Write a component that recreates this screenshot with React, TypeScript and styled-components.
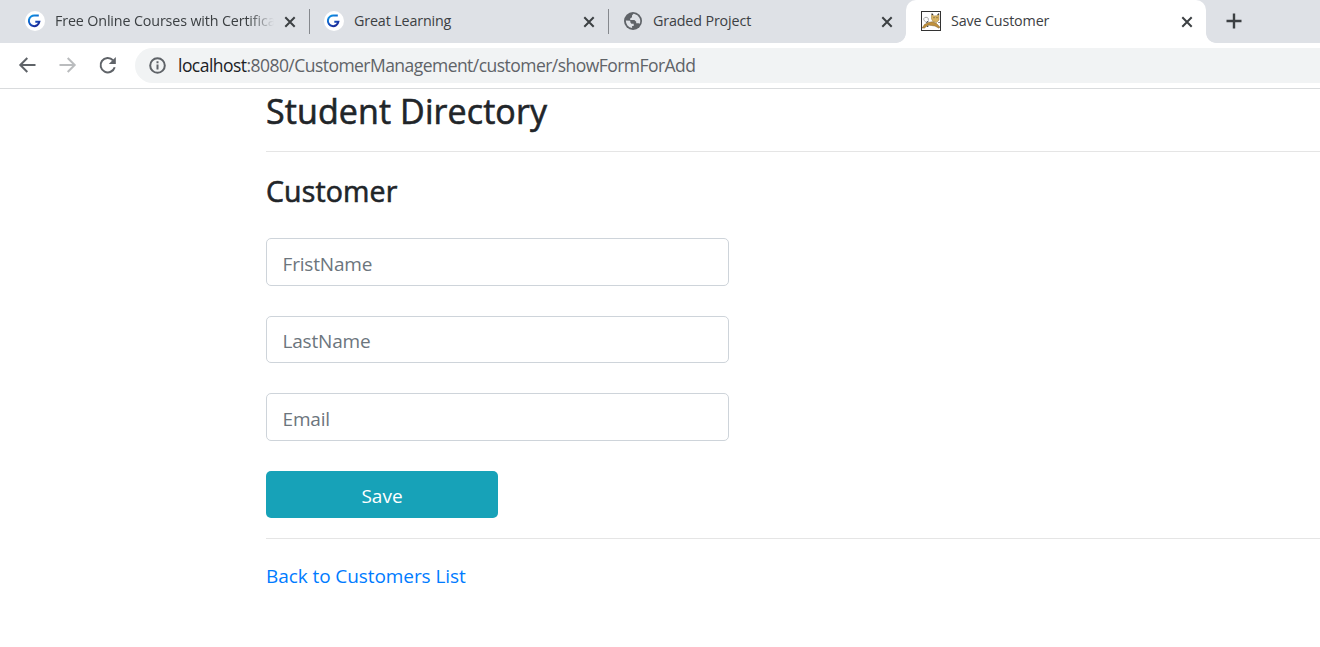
import React from 'react';
import styled, { createGlobalStyle } from 'styled-components';

const Global = createGlobalStyle`
  * { box-sizing: border-box; }
  html, body { margin: 0; background: #fff; overflow: hidden; }
  body { font-family: "Segoe UI", "Open Sans", "Noto Sans", sans-serif; color: #212529; }
`;

const Window = styled.div`
  width: 1320px;
  height: 647px;
  overflow: hidden;
  background: #fff;
`;

const TabStrip = styled.div`
  display: flex;
  height: 43px;
  background: #dee1e6;
`;

const Tab = styled.div<{ $width: number; $pad: number; $active?: boolean }>`
  position: relative;
  display: flex;
  align-items: center;
  flex: none;
  width: ${p => p.$width}px;
  height: 43px;
  padding: 0 13px 1px ${p => p.$pad}px;
  background: ${p => (p.$active ? '#fff' : 'transparent')};
  border-radius: ${p => (p.$active ? '10px 10px 0 0' : '0')};
`;

const Foot = styled.span<{ $side: 'left' | 'right' }>`
  position: absolute;
  bottom: 0;
  ${p => p.$side}: -10px;
  width: 10px;
  height: 10px;
  background: radial-gradient(circle at ${p => (p.$side === 'left' ? '0 0' : '100% 0')}, #dee1e6 9.5px, #fff 10.2px);
`;

const Favicon = styled.svg`
  flex: none;
  width: 20px;
  height: 20px;
`;

const TabTitle = styled.span<{ $fade?: boolean }>`
  flex: 1;
  min-width: 0;
  margin-left: 10px;
  overflow: hidden;
  white-space: nowrap;
  font-size: 14.3px;
  line-height: 22px;
  letter-spacing: -0.14px;
  color: #3c4043;
  ${p => p.$fade && 'mask-image: linear-gradient(to right, #000 calc(100% - 26px), transparent);'}
`;

const CloseIcon = styled.svg`
  flex: none;
  width: 12px;
  height: 12px;
  margin: 1px 0 0 10px;
  stroke: #3c4043;
  stroke-width: 2;
`;

const Divider = styled.span`
  flex: none;
  width: 1px;
  height: 25px;
  margin-top: 9px;
  background: #85888d;
`;

const NewTab = styled.svg`
  width: 16px;
  height: 16px;
  margin: 13px 0 0 20px;
  stroke: #3c4043;
  stroke-width: 2.4;
`;

const Toolbar = styled.div`
  display: flex;
  height: 46px;
  padding: 5px 0 0 17px;
  border-bottom: 1px solid #d9dbdd;
`;

const NavIcon = styled.svg<{ $color: string }>`
  flex: none;
  width: 20px;
  height: 20px;
  margin: 7px 20px 0 0;
  fill: none;
  stroke: ${p => p.$color};
  stroke-width: 2;
`;

const AddressBar = styled.div`
  display: flex;
  align-items: center;
  flex: 1;
  height: 35px;
  margin-left: -2px;
  padding-left: 14px;
  background: #f1f3f4;
  border-radius: 18px 0 0 18px;
`;

const InfoIcon = styled.svg`
  flex: none;
  width: 17px;
  height: 17px;
  fill: none;
  stroke: #5f6368;
  stroke-width: 2;
`;

const Url = styled.span`
  margin: 0 0 2px 12px;
  font-size: 17.5px;
  letter-spacing: -0.54px;
  line-height: 24px;
  color: #5f6368;
  white-space: nowrap;
`;

const Host = styled.span`
  color: #202124;
`;

const Page = styled.main`
  width: 1320px;
  padding: 0 0 0 266px;
`;

const Title = styled.h3`
  margin: 0;
  padding-top: 1px;
  height: 62px;
  font-size: 34px;
  font-weight: 500;
  line-height: 42px;
  letter-spacing: 0.1px;
  -webkit-text-stroke: 0.6px #212529;
`;

const SubTitle = styled.h4`
  margin: 0;
  padding-top: 21px;
  height: 86px;
  font-size: 28.5px;
  font-weight: 500;
  line-height: 36px;
  letter-spacing: 0.15px;
  -webkit-text-stroke: 0.6px #212529;
`;

const Rule = styled.hr`
  height: 1px;
  margin: 0;
  border: 0;
  background: #e5e5e5;
`;

const Form = styled.form`
  display: flex;
  flex-direction: column;
  height: 300px;
`;

const Field = styled.input<{ $height: number }>`
  width: 463px;
  height: ${p => p.$height}px;
  margin-bottom: 30px;
  padding: ${p => p.$height - 44}px 15.5px 0;
  border: 1px solid #ced4da;
  border-radius: 5px;
  background: #fff;
  font: 19px "Segoe UI", "Open Sans", sans-serif;
  letter-spacing: -0.18px;
  &::placeholder { color: #6c757d; opacity: 1; }
`;

const SaveButton = styled.button`
  width: 232px;
  height: 47px;
  padding: 3px 0 0;
  border: 0;
  border-radius: 5px;
  background: #17a2b8;
  color: #fff;
  font: 19px "Segoe UI", "Open Sans", sans-serif;
`;

const BackLink = styled.a`
  display: inline-block;
  margin-top: 22px;
  font-size: 19px;
  line-height: 30px;
  letter-spacing: -0.08px;
  color: #007bff;
  text-decoration: none;
  white-space: nowrap;
`;

const GIcon = () => (
  <Favicon viewBox="0 0 20 20">
    <defs>
      <linearGradient id="g" x1="0" y1="0" x2="0.6" y2="1">
        <stop offset="0" stopColor="#0a9be8" />
        <stop offset="0.6" stopColor="#1355c4" />
        <stop offset="1" stopColor="#1b2f9c" />
      </linearGradient>
    </defs>
    <circle cx="10" cy="10" r="10" fill="#fff" />
    <path d="M13.8 4.600H10A5.300 5.300 0 1 0 14.400 10.700H10.300" fill="none" stroke="url(#g)" strokeWidth="2" />
  </Favicon>
);

const GlobeIcon = () => (
  <Favicon viewBox="0 0 20 20">
    <circle cx="10" cy="10" r="9" fill="#5f6368" />
    <path
      d="M10.5 2.8 9 4.6v1.6L7.2 7.4v1.5h4.2l1.8 1.8v1.5h2.4l1.1.6A7.2 7.2 0 0 0 11.5 3zM2.9 9.4a7.2 7.2 0 0 0 6.2 7.7v-2h1.6v-2.4H8.4L7.3 11.2V9.7z"
      fill="#dee1e6"
    />
  </Favicon>
);

const CatIcon = () => (
  <Favicon viewBox="0 0 20 20">
    <rect x="0.5" y="0.5" width="19" height="19" fill="#fff" stroke="#333" />
    <path d="M6.500 11.500C2 10.500 1.500 6.500 5 6.300c1.800 0 2.600 1 2.300 2.700" fill="none" stroke="#aaa" strokeWidth="1" />
    <path d="M1.200 17 3.500 13.500l4-2 4-.8 4 1.800 3.300 3.500-.8 1.200-4-2.200-3.500-.5-3.500-.5-3.500 3z" fill="#c0913c" stroke="#7a5a26" strokeWidth="0.5" />
    <path d="M10.500 3.500 13 5l2.500-.2L18 3.500v5.500L15.500 11.500 12 10.500 10.500 8z" fill="#d9b463" stroke="#95773c" strokeWidth="0.5" />
    <path d="M10.500 3h1.200v1M17 4V3h1.200M5.500 11.500l2-1.500M6 15.500l1.500-.5M17.500 11l1 1" fill="none" stroke="#222" strokeWidth="1" />
    <path d="M12.500 6.700h1M15.500 6.700h1" stroke="#5d4c2d" strokeWidth="1" />
  </Favicon>
);

const Close = () => (
  <CloseIcon viewBox="0 0 12 12">
    <path d="M1.300 1.300l9.400 9.400M10.700 1.300L1.300 10.700" />
  </CloseIcon>
);

export default function App() {
  return (
    <Window>
      <Global />
      <TabStrip>
        <Tab $width={309} $pad={25}>
          <GIcon />
          <TabTitle $fade>Free Online Courses with Certificates</TabTitle>
          <Close />
        </Tab>
        <Divider />
        <Tab $width={298} $pad={14}>
          <GIcon />
          <TabTitle>Great Learning</TabTitle>
          <Close />
        </Tab>
        <Divider />
        <Tab $width={297} $pad={14}>
          <GlobeIcon />
          <TabTitle>Graded Project</TabTitle>
          <Close />
        </Tab>
        <Tab $width={300} $pad={15} $active>
          <Foot $side="left" />
          <CatIcon />
          <TabTitle>Save Customer</TabTitle>
          <Close />
          <Foot $side="right" />
        </Tab>
        <NewTab viewBox="0 0 16 16">
          <path d="M8 .5v15M.5 8h15" />
        </NewTab>
      </TabStrip>
      <Toolbar>
        <NavIcon $color="#5f6368" viewBox="0 0 20 20">
          <path d="M18.500 10H3.500M10.300 3 3.300 10l7 7" />
        </NavIcon>
        <NavIcon $color="#babcbe" viewBox="0 0 20 20">
          <path d="M2.500 10h15M10.700 3l7 7-7 7" />
        </NavIcon>
        <NavIcon $color="#5f6368" viewBox="0 0 20 20">
          <path d="M16 5.200A7.200 7.200 0 1 0 17.700 12.200" />
          <path d="M18.800 2v7h-7z" fill="#5f6368" stroke="none" />
        </NavIcon>
        <AddressBar>
          <InfoIcon viewBox="0 0 17 17">
            <circle cx="8.500" cy="8.500" r="7.300" />
            <path d="M8.500 7.500v5M8.500 4.300v1.900" />
          </InfoIcon>
          <Url>
            <Host>localhost</Host>:8080/CustomerManagement/customer/showFormForAdd
          </Url>
        </AddressBar>
      </Toolbar>
      <Page>
        <Title>Student Directory</Title>
        <Rule />
        <SubTitle>Customer</SubTitle>
        <Form>
          <Field $height={48} placeholder="FristName" />
          <Field $height={47} placeholder="LastName" />
          <Field $height={48} placeholder="Email" />
          <SaveButton type="button">Save</SaveButton>
        </Form>
        <Rule />
        <BackLink>Back to Customers List</BackLink>
      </Page>
    </Window>
  );
}
